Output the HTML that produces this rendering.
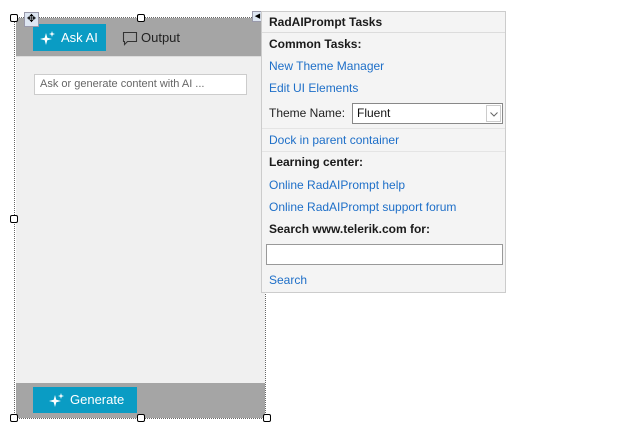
<!DOCTYPE html>
<html><head><style>
body{margin:0;width:642px;height:433px;background:#fff;position:relative;overflow:hidden;font-family:"Liberation Sans",sans-serif;font-size:12px;}
.a{position:absolute;}
.h{position:absolute;width:6px;height:6px;border:1px solid #000;background:#fff;border-radius:2px;}
.t{position:absolute;left:269px;line-height:14px;white-space:nowrap;}
.l{color:#1e6fc8;}
.b{font-weight:bold;color:#1a1a1a;}
</style></head><body>
<div class="a" style="left:14px;top:17px;width:252px;height:402px;border:1px dotted #666;box-sizing:border-box"></div>
<div class="a" style="left:16px;top:18px;width:249px;height:38px;background:#a5a5a5"></div>
<div class="a" style="left:16px;top:56px;width:249px;height:327px;background:#f0f0f0;border-top:1px solid #ddd;box-sizing:border-box"></div>
<div class="a" style="left:16px;top:383px;width:249px;height:35px;background:#a5a5a5"></div>
<div class="a" style="left:33px;top:24px;width:73px;height:27px;background:#0a9cc4;color:#fff;font-size:13px;line-height:27px">
<svg class="a" style="left:7px;top:6px" width="16" height="16" viewBox="0 0 16 16" fill="#fff"><path d="M6 3 L7.3 7.7 L12 9 L7.3 10.3 L6 15 L4.7 10.3 L0 9 L4.7 7.7Z"/><path d="M12 1 L12.7 3.3 L15 4 L12.7 4.7 L12 7 L11.3 4.7 L9 4 L11.3 3.3Z"/></svg>
<span class="a" style="left:28px">Ask AI</span></div>
<svg class="a" style="left:122px;top:31px" width="16" height="15" viewBox="0 0 16 15" fill="none" stroke="#333" stroke-width="1.1"><path d="M1.5 1.5h13v9h-9l-3 3v-3h-1z"/></svg>
<div class="a" style="left:141px;top:24px;height:27px;color:#222;font-size:13px;line-height:27px">Output</div>
<div class="a" style="left:34px;top:74px;width:213px;height:21px;background:#fff;border:1px solid #ccc;box-sizing:border-box;color:#666;font-size:11px;line-height:19px;padding-left:5px">Ask or generate content with AI ...</div>
<div class="a" style="left:33px;top:387px;width:104px;height:26px;background:#0a9cc4;color:#fff;font-size:13px;line-height:26px">
<svg class="a" style="left:16px;top:5px" width="16" height="16" viewBox="0 0 16 16" fill="#fff"><path d="M6 3 L7.3 7.7 L12 9 L7.3 10.3 L6 15 L4.7 10.3 L0 9 L4.7 7.7Z"/><path d="M12 1 L12.7 3.3 L15 4 L12.7 4.7 L12 7 L11.3 4.7 L9 4 L11.3 3.3Z"/></svg>
<span class="a" style="left:37px">Generate</span></div>
<div class="h" style="left:10px;top:14px"></div><div class="h" style="left:137px;top:14px"></div>
<div class="h" style="left:10px;top:215px"></div><div class="h" style="left:10px;top:414px"></div>
<div class="h" style="left:137px;top:414px"></div><div class="h" style="left:263px;top:414px"></div>
<div class="a" style="left:24px;top:12px;width:13px;height:13px;background:#dde6f2;border:1px solid #99a;font-size:11px;line-height:12px;text-align:center">✥</div>
<div class="a" style="left:252px;top:11px;width:9px;height:9px;background:#dde6f2;border:1px solid #99a;font-size:7px;line-height:9px;text-align:center">◀</div>
<div class="a" style="left:261px;top:11px;width:245px;height:282px;background:#f4f4f4;border:1px solid #ccc;box-sizing:border-box"></div>
<div class="a" style="left:262px;top:32px;width:243px;height:1px;background:#dcdcdc"></div>
<div class="a" style="left:262px;top:128px;width:243px;height:1px;background:#e4e4e4"></div>
<div class="a" style="left:262px;top:151px;width:243px;height:1px;background:#e4e4e4"></div>
<div class="t b" style="top:15px">RadAIPrompt Tasks</div>
<div class="t b" style="top:37px">Common Tasks:</div>
<div class="t l" style="top:59px">New Theme Manager</div>
<div class="t l" style="top:81px">Edit UI Elements</div>
<div class="t" style="top:106px;color:#222">Theme Name:</div>
<div class="a" style="left:352px;top:103px;width:151px;height:21px;background:#fff;border:1px solid #888;box-sizing:border-box;line-height:19px;padding-left:4px;color:#111">Fluent
<div class="a" style="right:1px;top:1px;width:15px;height:17px;border:1px solid #ccc;box-sizing:border-box"><svg class="a" style="left:3px;top:6px" width="8" height="5" viewBox="0 0 8 5" fill="none" stroke="#666"><path d="M0.5 0.5l3.5 3.5l3.5-3.5"/></svg></div></div>
<div class="t l" style="top:133px">Dock in parent container</div>
<div class="t b" style="top:155px">Learning center:</div>
<div class="t l" style="top:178px">Online RadAIPrompt help</div>
<div class="t l" style="top:200px">Online RadAIPrompt support forum</div>
<div class="t b" style="top:222px">Search www.telerik.com for:</div>
<div class="a" style="left:266px;top:244px;width:237px;height:21px;background:#fff;border:1px solid #999;box-sizing:border-box"></div>
<div class="t l" style="top:273px">Search</div>
</body></html>
